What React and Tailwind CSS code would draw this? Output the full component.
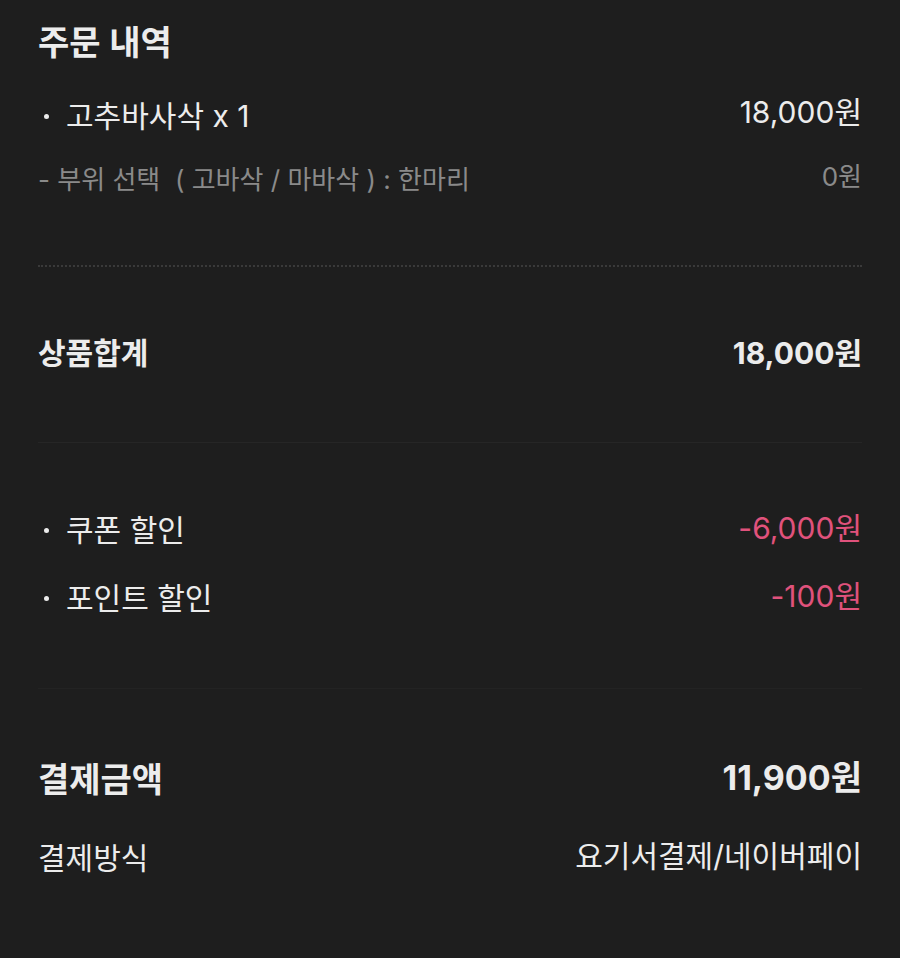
import React from "react";

const font = { fontFamily: 'Inter, "Noto Sans CJK KR", "Noto Sans", sans-serif' };

const Row = ({ children, className = "" }) => (
  <div className={`flex justify-between items-center ${className}`}>{children}</div>
);

const Bullet = ({ label }) => (
  <span className="flex items-center">
    <span className="w-[28px] flex items-center pl-[6px]">
      <span className="block w-[5px] h-[5px] rounded-full bg-[#ebebeb]" />
    </span>
    <span>{label}</span>
  </span>
);

export default function App() {
  return (
    <div
      className="min-h-screen w-full bg-[#1e1e1e] text-[#ececec] px-[38px] pt-[21px] pb-10"
      style={font}
    >
      {/* 주문 내역 */}
      <h1 className="text-[34px] leading-[44px] font-semibold">주문 내역</h1>

      <Row className="mt-[31px] text-[30px] leading-[40px]">
        <Bullet label="고추바사삭 x 1" />
        <span className="-mt-[8px]">18,000원</span>
      </Row>

      <Row className="mt-[24px] text-[26px] leading-[40px] text-[#8a8a8a]">
        <span className="whitespace-pre">- 부위 선택  ( 고바삭 / 마바삭 ) : 한마리</span>
        <span className="-mt-[6px]">0원</span>
      </Row>

      <div className="mt-[65px] border-t-2 border-dotted border-[#3a3a3a]" />

      {/* 상품합계 */}
      <Row className="mt-[66px] text-[30px] leading-[40px] font-bold">
        <span>상품합계</span>
        <span>18,000원</span>
      </Row>

      <div className="mt-[69px] border-t border-[#262626]" />

      {/* 할인 */}
      <Row className="mt-[67px] text-[30px] leading-[40px]">
        <Bullet label="쿠폰 할인" />
        <span className="-mt-[4px] text-[#e0527c]">-6,000원</span>
      </Row>
      <Row className="mt-[28px] text-[30px] leading-[40px]">
        <Bullet label="포인트 할인" />
        <span className="-mt-[4px] text-[#e0527c]">-100원</span>
      </Row>

      <div className="mt-[70px] border-t border-[#232323]" />

      {/* 결제금액 */}
      <Row className="mt-[69px] text-[34px] leading-[44px] font-bold">
        <span>결제금액</span>
        <span className="-mt-[4px]">11,900원</span>
      </Row>
      <Row className="mt-[36px] text-[30px] leading-[40px]">
        <span>결제방식</span>
        <span className="-mt-[4px]">요기서결제/네이버페이</span>
      </Row>
    </div>
  );
}
